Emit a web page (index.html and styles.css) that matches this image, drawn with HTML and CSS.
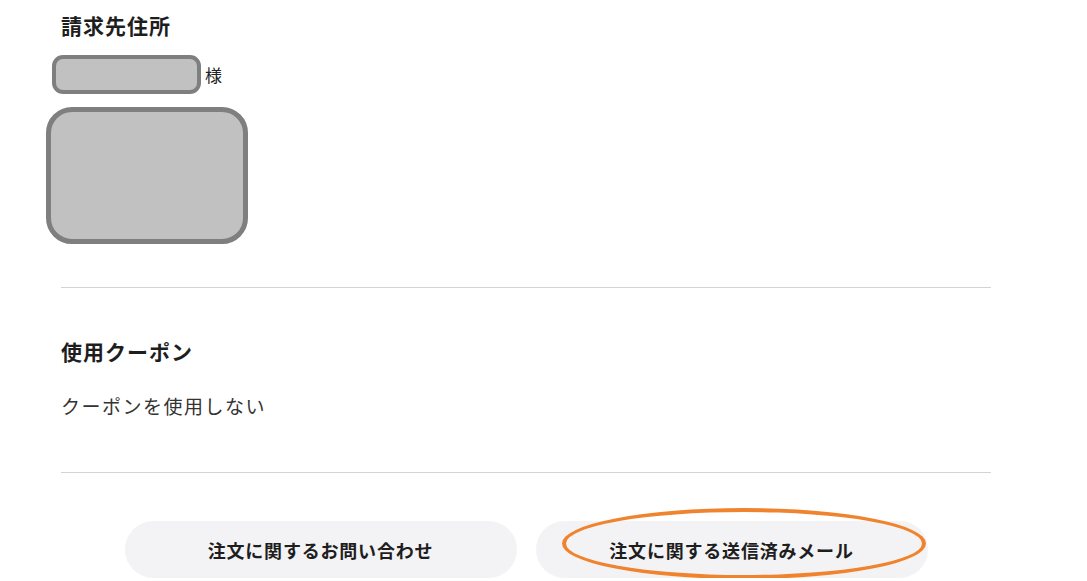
FILE: index.html
```html
<!DOCTYPE html>
<html lang="ja">
<head>
<meta charset="utf-8">
<link rel="stylesheet" href="styles.css">
</head>
<body>
<div class="page">
  <section class="section billing">
    <h2 class="title">請求先住所</h2>
    <div class="name-row">
      <div class="redact redact-name"></div>
      <span class="sama">様</span>
    </div>
    <div class="redact redact-address"></div>
  </section>
  <hr class="divider">
  <section class="section coupon">
    <h2 class="title">使用クーポン</h2>
    <p class="coupon-text">クーポンを使用しない</p>
  </section>
  <hr class="divider">
  <div class="actions">
    <button class="pill">注文に関するお問い合わせ</button>
    <button class="pill marked">注文に関する送信済みメール<span class="ring"></span></button>
  </div>
</div>
</body>
</html>
```

FILE: styles.css
```css
* { box-sizing: border-box; }
html, body { margin: 0; padding: 0; background: #fff; }
body {
  font-family: "Noto Sans CJK JP", "Noto Sans", sans-serif;
  color: #222;
  overflow: hidden;
}
.page {
  width: 930px;
  margin-left: 61px;
  padding-top: 11px;
}
.title {
  margin: 0;
  font-size: 21px;
  font-weight: 700;
  line-height: 28px;
  letter-spacing: 1px;
  color: #1e1e1e;
}
.name-row {
  display: flex;
  align-items: center;
  margin-top: 16px;
  margin-left: -9px;
}
.redact {
  background: #c1c1c1;
  border: 4px solid #7f7f7f;
}
.redact-name {
  width: 149px;
  height: 39px;
  border-radius: 11px;
}
.sama {
  font-size: 17px;
  margin-left: 4px;
  color: #222;
}
.redact-address {
  width: 202px;
  height: 137px;
  border-width: 5px;
  border-radius: 26px;
  margin-top: 13px;
  margin-left: -15px;
}
.divider {
  border: 0;
  border-top: 1px solid #d3d3d3;
  margin: 0;
}
.billing { padding-bottom: 43px; }
.coupon { padding-top: 49px; padding-bottom: 53px; }
.coupon-text {
  margin: 28px 0 0;
  font-size: 19px;
  line-height: 26px;
  color: #333;
  letter-spacing: 1.5px;
}
.actions {
  display: flex;
  justify-content: center;
  gap: 19px;
  padding-top: 48px;
}
.pill {
  position: relative;
  width: 392px;
  height: 57px;
  border: 0;
  border-radius: 29px;
  background: #f3f3f5;
  font-family: inherit;
  font-size: 18px;
  font-weight: 700;
  letter-spacing: 0.8px;
  color: #1e1e1e;
}
.ring {
  position: absolute;
  left: 26px;
  top: -13px;
  width: 364px;
  height: 71px;
  border: 4px solid #f0832d;
  border-radius: 50%;
  pointer-events: none;
}
```
